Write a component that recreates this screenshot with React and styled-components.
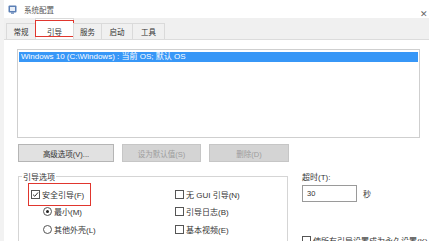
import styled, { createGlobalStyle } from 'styled-components';

const GlobalStyle = createGlobalStyle`
  html, body {
    margin: 0;
    padding: 0;
    background: #ffffff;
  }
  body {
    font-family: "Liberation Sans", "Noto Sans CJK SC", sans-serif;
    font-size: 8px;
    color: #3a3a3a;
  }
`;

const Window = styled.div`
  width: 429px;
  height: 241px;
  overflow: hidden;
  background: #fff;
  border-left: 4px solid #f2f2f2;
  box-sizing: border-box;
  display: flex;
  flex-direction: column;
`;

const TitleBar = styled.div`
  height: 18px;
  display: flex;
  align-items: center;
  padding: 0 1px 0 4px;
  gap: 7px;
`;

const Title = styled.span`
  flex: 1;
  font-size: 7.5px;
  color: #555;
`;

const Close = styled.span`
  font-size: 9px;
  color: #666;
  margin-top: 9px;
`;

const TabStrip = styled.div`
  height: 22px;
  background: #f0f0f0;
  border-bottom: 1px solid #dcdcdc;
  display: flex;
  align-items: flex-end;
  padding-left: 2px;
`;

const Tab = styled.div`
  position: relative;
  width: ${({ w }) => w}px;
  height: ${({ active }) => (active ? '21px' : '16px')};
  padding-top: ${({ active }) => (active ? '4px' : '0')};
  display: flex;
  align-items: center;
  justify-content: center;
  background: ${({ active }) => (active ? '#fff' : '#f0f0f0')};
  border: 1px solid #dadada;
  border-bottom: none;
  margin-right: -1px;
  color: #333;
  font-size: 7.5px;
  box-sizing: border-box;

  &::after {
    content: '';
    display: ${({ active }) => (active ? 'block' : 'none')};
    position: absolute;
    left: -1px;
    right: -1px;
    top: 1px;
    bottom: 2px;
    border: 1.5px solid #e0362e;
  }
`;

const Content = styled.div`
  padding: 9px 9px 0 13px;
  display: flex;
  flex-direction: column;
`;

const ListBox = styled.div`
  height: 89px;
  border: 1px solid #cfcfcf;
  padding: 2px 1px;
  box-sizing: border-box;
`;

const ListRow = styled.div`
  height: 10px;
  line-height: 10px;
  padding-left: 2px;
  background: ${({ selected }) => (selected ? '#3797f7' : 'transparent')};
  color: ${({ selected }) => (selected ? '#fff' : '#333')};
  font-size: 8px;
  white-space: nowrap;
`;

const ButtonRow = styled.div`
  display: flex;
  gap: 8px;
  margin-top: 6px;
  padding-left: 1px;
`;

const Button = styled.div`
  width: ${({ w }) => w}px;
  height: 18px;
  display: flex;
  align-items: center;
  justify-content: center;
  background: ${({ disabled }) => (disabled ? '#d4d4d4' : '#e1e1e1')};
  border: 1px solid ${({ disabled }) => (disabled ? '#c6c6c6' : '#b5b5b5')};
  color: ${({ disabled }) => (disabled ? '#9c9c9c' : '#333')};
  font-size: 7.5px;
  box-sizing: border-box;
`;

const Lower = styled.div`
  display: flex;
  margin-top: 9px;
  padding-left: 1px;
`;

const Group = styled.fieldset`
  margin: 0;
  flex: 0 0 270px;
  width: 270px;
  height: 80px;
  box-sizing: border-box;
  border: 1px solid #d5d5d5;
  padding: 2px 0 0 12px;
  display: grid;
  grid-template-columns: 144px 1fr;
  grid-auto-rows: 18px;
  align-items: center;
  align-content: start;
`;

const Legend = styled.legend`
  padding: 0 1px;
  margin-left: -9px;
  font-size: 8px;
  color: #333;
`;

const Option = styled.label`
  display: flex;
  align-items: center;
  gap: 2px;
  font-size: 8px;
  color: #333;
  white-space: nowrap;
  padding-left: ${({ indent }) => (indent ? '12px' : '0')};
  margin-top: ${({ first }) => (first ? '2px' : '0')};
`;

const Highlight = styled.span`
  display: inline-flex;
  align-items: center;
  gap: 2px;
  margin-left: -3px;
  padding: 0 6px 0 2px;
  height: 23px;
  border: 1.5px solid #e0362e;
  box-sizing: border-box;
`;

const Box = styled.span`
  flex: 0 0 auto;
  width: 7px;
  height: 7px;
  border: 1px solid #555;
  background: #fff;
  display: inline-block;
  position: relative;
`;

const Radio = styled.span`
  flex: 0 0 auto;
  width: 7px;
  height: 7px;
  border: 1px solid #555;
  border-radius: 50%;
  display: inline-flex;
  align-items: center;
  justify-content: center;

  &::after {
    content: '';
    width: 3px;
    height: 3px;
    border-radius: 50%;
    background: ${({ checked }) => (checked ? '#222' : 'transparent')};
  }
`;

const Side = styled.div`
  margin-left: 14px;
  display: flex;
  flex-direction: column;
  min-width: 0;
`;

const TimeoutLabel = styled.div`
  font-size: 8px;
  color: #333;
`;

const TimeoutRow = styled.div`
  display: flex;
  align-items: center;
  gap: 6px;
  margin-top: 3px;
  font-size: 8px;
`;

const Input = styled.div`
  width: 55px;
  height: 17px;
  border: 1px solid #9a9a9a;
  box-sizing: border-box;
  display: flex;
  align-items: center;
  padding-left: 4px;
  font-size: 7.5px;
  color: #333;
`;

const Permanent = styled(Option)`
  margin-top: 33px;
`;

const Check = ({ checked }) => (
  <Box>
    {checked && (
      <svg width="7" height="7" viewBox="0 0 7 7" style={{ position: 'absolute', left: 0, top: 0 }}>
        <path d="M1 3.6 L2.8 5.3 L6 1.5" fill="none" stroke="#333" strokeWidth="1" />
      </svg>
    )}
  </Box>
);

const AppIcon = () => (
  <svg width="9" height="9" viewBox="0 0 9 9">
    <rect x="0.5" y="0.5" width="8" height="7" rx="1" fill="#5b7fb5" />
    <rect x="2" y="2" width="5" height="4" fill="#e8eef8" />
    <rect x="3" y="7.5" width="3" height="1.2" fill="#5b7fb5" />
  </svg>
);

const App = () => (
  <>
    <GlobalStyle />
    <Window>
      <TitleBar>
        <AppIcon />
        <Title>系统配置</Title>
        <Close>✕</Close>
      </TitleBar>
      <TabStrip>
        <Tab w={30}>常规</Tab>
        <Tab w={39} active>引导</Tab>
        <Tab w={29}>服务</Tab>
        <Tab w={32}>启动</Tab>
        <Tab w={33}>工具</Tab>
      </TabStrip>
      <Content>
        <ListBox>
          <ListRow selected>Windows 10 (C:\Windows) : 当前 OS; 默认 OS</ListRow>
        </ListBox>
        <ButtonRow>
          <Button w={96}>高级选项(V)...</Button>
          <Button w={79} disabled>设为默认值(S)</Button>
          <Button w={80} disabled>删除(D)</Button>
        </ButtonRow>
        <Lower>
          <Group>
            <Legend>引导选项</Legend>
            <Option first>
              <Highlight>
                <Check checked />
                安全引导(F)
              </Highlight>
            </Option>
            <Option first>
              <Check />
              无 GUI 引导(N)
            </Option>
            <Option indent>
              <Radio checked />
              最小(M)
            </Option>
            <Option>
              <Check />
              引导日志(B)
            </Option>
            <Option indent>
              <Radio />
              其他外壳(L)
            </Option>
            <Option>
              <Check />
              基本视频(E)
            </Option>
          </Group>
          <Side>
            <TimeoutLabel>超时(T):</TimeoutLabel>
            <TimeoutRow>
              <Input>30</Input>
              <span>秒</span>
            </TimeoutRow>
            <Permanent>
              <Check />
              使所有引导设置成为永久设置(K)
            </Permanent>
          </Side>
        </Lower>
      </Content>
    </Window>
  </>
);

export default App;
